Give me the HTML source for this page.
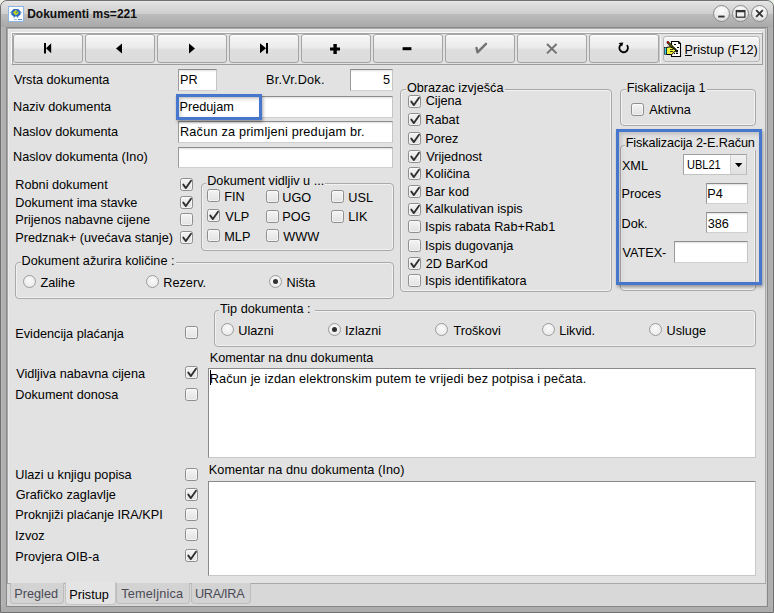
<!DOCTYPE html>
<html><head><meta charset="utf-8"><style>
html,body{margin:0;padding:0;}
body{width:774px;height:613px;position:relative;overflow:hidden;background:#e9efe4;font-family:"Liberation Sans",sans-serif;}
.t{position:absolute;font-size:12.7px;line-height:12.7px;white-space:pre;color:#000;}
.cb{position:absolute;width:11px;height:11px;border:1px solid #8e8e8e;border-radius:2.5px;background:linear-gradient(#f4f4f4,#e2e2e2);box-shadow:inset 0 0 0 1px rgba(255,255,255,0.5);}
.cb svg{position:absolute;left:-1px;top:-1px;}
.rb{position:absolute;width:11px;height:11px;border:1px solid #9c9c9c;border-radius:50%;background:radial-gradient(circle at 50% 40%,#fafafa,#e6e6e6);}
.rb .dot{position:absolute;left:3px;top:3px;width:5px;height:5px;border-radius:50%;background:#303030;}
.fld{position:absolute;box-sizing:border-box;background:#fff;border:1px solid;border-color:#8c8c8c #c4c4c4 #cfcfcf #9a9a9a;box-shadow:inset 0 2px 2px -1px rgba(0,0,0,0.13);}
.grp{position:absolute;box-sizing:border-box;border:1px solid #a9a9a9;border-radius:4px;box-shadow:inset 0 0 0 1px #f1f1f1;}
.gt{background:#e2e2e2;}
.btn{position:absolute;box-sizing:border-box;width:70px;height:29px;top:34px;border:1px solid #a4a4a4;border-radius:3px;background:linear-gradient(#f6f6f6 0%,#ececec 45%,#dedede 55%,#dcdcdc 100%);box-shadow:inset 0 1px 0 #fff;}
.btn svg{position:absolute;left:-1px;top:0;}
.hl{position:absolute;box-sizing:border-box;border:3px solid #4777cc;box-shadow:1px 2px 3px rgba(0,0,0,0.35), inset 2px 2px 4px rgba(0,0,0,0.16);}
.tab{position:absolute;box-sizing:border-box;border:1px solid #bdbdbd;border-top:none;border-radius:0 0 4px 4px;background:#d3d3d3;}
</style></head><body>
<div style="position:absolute;left:0px;top:0px;width:774px;height:613px;background:#b0b0b0;border-radius:7px 7px 0 0;box-sizing:border-box;border:1px solid #707070;"></div>
<div style="position:absolute;left:1px;top:1px;width:772px;height:26px;background:linear-gradient(#efefef 0px,#e2e2e2 1px,#cecece 13px,#bcbcbc 13px,#a9a9a9 26px);border-radius:6px 6px 0 0;"></div>
<div style="position:absolute;left:1px;top:27px;width:5px;height:585px;background:#b0b0b0;border-left:1px solid #b9b9b9;box-sizing:border-box;"></div>
<div style="position:absolute;left:767px;top:27px;width:6px;height:585px;background:#b0b0b0;"></div>
<div style="position:absolute;left:1px;top:607px;width:772px;height:5px;background:#acacac;"></div>
<div style="position:absolute;left:6px;top:27px;width:762px;height:580px;box-sizing:border-box;background:#d8d8d8;border:1px solid #888;"></div>
<div style="position:absolute;left:766px;top:28px;width:1px;height:578px;background:#cdcdcd;"></div>
<div style="position:absolute;left:7px;top:28px;width:759px;height:556px;box-sizing:border-box;background:#e2e2e2;border:1px solid #a8a8a8;box-shadow:inset 1px 1px 0 #ebebeb;"></div>
<div style="position:absolute;left:8px;top:6px;width:14px;height:14px;border:1px solid #8db5e2;background:#fff;"><svg width="14" height="14" viewBox="0 0 14 14" style="position:absolute;left:0;top:0"><path d="M4.6 2 L9.2 2 L11.6 4.4 L11.6 7.4 L9.2 9.4 L4.6 9.4 L2.2 7.4 L2.2 4.4 Z" fill="#2a6cc0"/><path d="M6.9 2.8 L9.9 5.7 L6.9 8.6 L3.9 5.7 Z" fill="#c6d41e"/><circle cx="7.5" cy="5.3" r="0.8" fill="#2a6cc0"/><rect x="0.8" y="5.2" width="1.6" height="0.9" fill="#7fa6d8"/><rect x="11.4" y="5.2" width="1.6" height="0.9" fill="#7fa6d8"/><rect x="4.6" y="9.2" width="1.3" height="1.3" fill="#2a6cc0"/><rect x="7.9" y="9.2" width="1.3" height="1.3" fill="#2a6cc0"/><rect x="4.8" y="12" width="3" height="1.1" fill="#9dbde6"/><rect x="9" y="12" width="4" height="1.1" fill="#5a8fd2"/></svg></div>
<div style="position:absolute;left:27.2px;top:7.6px;font-size:12px;line-height:12px;font-weight:bold;white-space:pre;color:#101010;font-family:'Liberation Sans',sans-serif;">Dokumenti ms=221</div>
<div style="position:absolute;left:712.5px;top:5.3px;width:15px;height:15px;border-radius:50%;border:1px solid #8a8a8a;background:radial-gradient(circle at 50% 30%,#fdfdfd 0%,#ececec 50%,#cfcfcf 100%);"><svg width="15" height="15" viewBox="0 0 15 15" style="position:absolute;left:0;top:0"><rect x="4.2" y="9.6" width="6.4" height="1.9" fill="#333"/></svg></div>
<div style="position:absolute;left:731.5px;top:5.3px;width:15px;height:15px;border-radius:50%;border:1px solid #8a8a8a;background:radial-gradient(circle at 50% 30%,#fdfdfd 0%,#ececec 50%,#cfcfcf 100%);"><svg width="15" height="15" viewBox="0 0 15 15" style="position:absolute;left:0;top:0"><rect x="3.3" y="4.6" width="8.6" height="6.6" fill="none" stroke="#333" stroke-width="1.3"/><rect x="3.3" y="4" width="8.6" height="2.3" fill="#333"/></svg></div>
<div style="position:absolute;left:750.5px;top:5.3px;width:15px;height:15px;border-radius:50%;border:1px solid #8a8a8a;background:radial-gradient(circle at 50% 30%,#fdfdfd 0%,#ececec 50%,#cfcfcf 100%);"><svg width="15" height="15" viewBox="0 0 15 15" style="position:absolute;left:0;top:0"><path d="M4.2 4.2 L10.8 10.8 M10.8 4.2 L4.2 10.8" stroke="#333" stroke-width="1.9"/></svg></div>
<div style="position:absolute;left:11px;top:32px;width:752px;height:33px;box-sizing:border-box;border-top:1px solid #fafafa;border-left:1px solid #fafafa;border-bottom:1px solid #9c9c9c;border-right:1px solid #9c9c9c;"></div>
<div style="position:absolute;left:12px;top:33px;width:750px;height:1px;background:#a6a6a6;"></div>
<div style="position:absolute;left:12px;top:33px;width:1px;height:31px;background:#a6a6a6;"></div>
<div class="btn" style="left:13px"><svg width="70" height="29" viewBox="0 0 70 29"><rect x="31" y="8" width="2" height="10.5" fill="#000"/><path d="M33 13.25 L38.2 8.2 L38.2 18.3 Z" fill="#000"/></svg></div>
<div class="btn" style="left:85px"><svg width="70" height="29" viewBox="0 0 70 29"><path d="M31 13.5 L37 8.5 L37 18.5 Z" fill="#000"/></svg></div>
<div class="btn" style="left:157px"><svg width="70" height="29" viewBox="0 0 70 29"><path d="M38 13.5 L32 8.5 L32 18.5 Z" fill="#000"/></svg></div>
<div class="btn" style="left:229px"><svg width="70" height="29" viewBox="0 0 70 29"><path d="M31 8.2 L37 13.25 L31 18.3 Z" fill="#000"/><rect x="37" y="8" width="2" height="10.5" fill="#000"/></svg></div>
<div class="btn" style="left:301px"><svg width="70" height="29" viewBox="0 0 70 29"><rect x="29" y="12.5" width="10" height="3" fill="#000"/><rect x="32.4" y="9" width="3.4" height="10" fill="#000"/></svg></div>
<div class="btn" style="left:373px"><svg width="70" height="29" viewBox="0 0 70 29"><rect x="29.6" y="12.2" width="8.8" height="3" fill="#000"/></svg></div>
<div class="btn" style="left:445px"><svg width="70" height="29" viewBox="0 0 70 29"><path d="M31.5 13 L32.5 17.3 L41 8.8" fill="none" stroke="#737373" stroke-width="2.4" stroke-linecap="round" stroke-linejoin="round"/></svg></div>
<div class="btn" style="left:517px"><svg width="70" height="29" viewBox="0 0 70 29"><path d="M30 9 L39.6 18.4 M39.6 9 L30 18.4" stroke="#737373" stroke-width="2"/></svg></div>
<div class="btn" style="left:589px"><svg width="70" height="29" viewBox="0 0 70 29"><path d="M33.1 8.9 A 4.3 4.3 0 1 0 37.9 10.1" fill="none" stroke="#000" stroke-width="1.8"/><path d="M29.6 7.9 L34.3 7.6 L33 11.6 Z" fill="#000"/></svg></div>
<div style="position:absolute;left:660px;top:35px;width:1px;height:28px;background:#f4f4f4;"></div>
<div style="position:absolute;left:659px;top:35px;width:1px;height:28px;background:#c8c8c8;"></div>
<div class="btn" style="left:663px;top:36px;width:97px;height:26px;border-color:#b9b9b9;background:linear-gradient(#f7f7f7,#e9e9e9 50%,#e1e1e1);"></div>
<svg style="position:absolute;left:664px;top:40px" width="18" height="18" viewBox="0 0 18 18">
<path d="M7.5 1.5 L14.5 1.5 L16.5 3.5 L16.5 16.5 L7.5 16.5 Z" fill="#fff" stroke="#000" stroke-width="1.1"/>
<path d="M14.5 1.5 L14.5 3.5 L16.5 3.5" fill="none" stroke="#000" stroke-width="0.9"/>
<rect x="10" y="4" width="2" height="1" fill="#000"/><rect x="13" y="7" width="2" height="1" fill="#000"/><rect x="13" y="10" width="1" height="1" fill="#000"/><rect x="10" y="13" width="1" height="1" fill="#000"/><rect x="12" y="13" width="2" height="1" fill="#000"/>
<path d="M3.8 2.3 L12.8 11.3" stroke="#000" stroke-width="2.4" stroke-linecap="round"/><path d="M4.5 3 L12.3 10.8" stroke="#f0f000" stroke-width="1" stroke-dasharray="1 0.6"/>
<rect x="3.2" y="1.6" width="1.6" height="1.6" fill="#e00000"/>
<path d="M2.5 7.5 L6 6.8 L9 8.2 L12 10.2 L10.5 11.5 L9.5 13 L7.5 14.5 L2.5 14.5 Z" fill="#f2f23a" stroke="#000" stroke-width="1"/>
<path d="M6 9.5 L9.5 9.5 M6 11.5 L9 11.5" stroke="#000" stroke-width="0.8"/>
<rect x="0.6" y="7.6" width="2" height="6.6" fill="#3ad8f0" stroke="#000" stroke-width="0.6"/>
</svg>
<div class="t" style="left:684.5px;top:43.75px;">Pristup (F12)</div>
<div style="position:absolute;left:685px;top:55px;width:7px;height:1px;background:#000;"></div>
<div class="t" style="left:13.9px;top:74.25px;">Vrsta dokumenta</div>
<div class="t" style="left:13.0px;top:101.25px;">Naziv dokumenta</div>
<div class="t" style="left:13.0px;top:126.25px;">Naslov dokumenta</div>
<div class="t" style="left:13.0px;top:151.25px;">Naslov dokumenta (Ino)</div>
<div class="t" style="left:266.0px;top:74.25px;letter-spacing:0.2px;">Br.Vr.Dok.</div>
<div class="fld" style="left:178px;top:69px;width:39px;height:22px"></div>
<div class="t" style="left:180.0px;top:74.25px;">PR</div>
<div class="fld" style="left:350px;top:69px;width:43px;height:22px"></div>
<div class="t" style="left:350px;width:40px;text-align:right;top:74.25px">5</div>
<div class="fld" style="left:178px;top:96px;width:215px;height:22px"></div>
<div class="t" style="left:179.5px;top:101.25px;">Predujam</div>
<div class="fld" style="left:178px;top:121px;width:215px;height:22px"></div>
<div class="t" style="letter-spacing:0.2px;left:180.0px;top:126.25px;">Račun za primljeni predujam br.</div>
<div class="fld" style="left:178px;top:147px;width:215px;height:21px"></div>
<div class="t" style="left:15.3px;top:179.25px;">Robni dokument</div>
<div class="t" style="left:15.3px;top:197.25px;">Dokument ima stavke</div>
<div class="t" style="left:15.3px;top:213.75px;">Prijenos nabavne cijene</div>
<div class="t" style="left:15.3px;top:231.55px;">Predznak+ (uvećava stanje)</div>
<div class="cb" style="left:180.3px;top:177.7px"><svg width="13" height="13" viewBox="0 0 13 13"><path d="M3.3 6.6 L5.9 10.1 L11 2.7" fill="none" stroke="#2e2e2e" stroke-width="1.85" stroke-linecap="round" stroke-linejoin="round"/></svg></div>
<div class="cb" style="left:180.3px;top:195.5px"><svg width="13" height="13" viewBox="0 0 13 13"><path d="M3.3 6.6 L5.9 10.1 L11 2.7" fill="none" stroke="#2e2e2e" stroke-width="1.85" stroke-linecap="round" stroke-linejoin="round"/></svg></div>
<div class="cb" style="left:180.3px;top:212.7px"></div>
<div class="cb" style="left:180.3px;top:230.5px"><svg width="13" height="13" viewBox="0 0 13 13"><path d="M3.3 6.6 L5.9 10.1 L11 2.7" fill="none" stroke="#2e2e2e" stroke-width="1.85" stroke-linecap="round" stroke-linejoin="round"/></svg></div>
<div class="grp" style="left:201px;top:183px;width:193px;height:68px"></div>
<div class="t gt" style="left:206.2px;top:175.25px;padding:0 1px 0 1px;">Dokument vidljiv u ...</div>
<div class="cb" style="left:207.3px;top:189.3px"></div>
<div class="t" style="left:224.3px;top:191.25px;">FIN</div>
<div class="cb" style="left:207.3px;top:209.3px"><svg width="13" height="13" viewBox="0 0 13 13"><path d="M3.3 6.6 L5.9 10.1 L11 2.7" fill="none" stroke="#2e2e2e" stroke-width="1.85" stroke-linecap="round" stroke-linejoin="round"/></svg></div>
<div class="t" style="left:225.2px;top:211.25px;">VLP</div>
<div class="cb" style="left:207.3px;top:229.3px"></div>
<div class="t" style="left:224.3px;top:231.25px;">MLP</div>
<div class="cb" style="left:265.5px;top:190.2px"></div>
<div class="t" style="left:282.3px;top:191.55px;">UGO</div>
<div class="cb" style="left:265.5px;top:209.7px"></div>
<div class="t" style="left:282.3px;top:211.25px;">POG</div>
<div class="cb" style="left:265.5px;top:229.3px"></div>
<div class="t" style="left:283.2px;top:231.25px;">WWW</div>
<div class="cb" style="left:331.3px;top:190.2px"></div>
<div class="t" style="left:348.3px;top:191.55px;">USL</div>
<div class="cb" style="left:331.3px;top:209.7px"></div>
<div class="t" style="left:348.3px;top:211.25px;">LIK</div>
<div class="grp" style="left:15px;top:262px;width:379px;height:37px"></div>
<div class="t gt" style="left:20.5px;top:254.95px;padding:0 1px 0 1px;">Dokument ažurira količine :</div>
<div class="rb" style="left:23.0px;top:275.0px"></div>
<div class="t" style="left:40.4px;top:276.75px;">Zalihe</div>
<div class="rb" style="left:146.0px;top:275.0px"></div>
<div class="t" style="left:163.3px;top:276.75px;">Rezerv.</div>
<div class="rb" style="left:269.2px;top:275.0px"><div class="dot"></div></div>
<div class="t" style="left:286.5px;top:276.75px;">Ništa</div>
<div class="grp" style="left:400px;top:89px;width:212px;height:203px"></div>
<div class="t gt" style="left:405.9px;top:81.95px;padding:0 1px 0 1px;">Obrazac izvješća</div>
<div class="cb" style="left:408.3px;top:94.5px"><svg width="13" height="13" viewBox="0 0 13 13"><path d="M3.3 6.6 L5.9 10.1 L11 2.7" fill="none" stroke="#2e2e2e" stroke-width="1.85" stroke-linecap="round" stroke-linejoin="round"/></svg></div>
<div class="t" style="left:425.7px;top:95.45px;">Cijena</div>
<div class="cb" style="left:408.3px;top:113.4px"><svg width="13" height="13" viewBox="0 0 13 13"><path d="M3.3 6.6 L5.9 10.1 L11 2.7" fill="none" stroke="#2e2e2e" stroke-width="1.85" stroke-linecap="round" stroke-linejoin="round"/></svg></div>
<div class="t" style="left:425.3px;top:114.35px;">Rabat</div>
<div class="cb" style="left:408.3px;top:131.7px"><svg width="13" height="13" viewBox="0 0 13 13"><path d="M3.3 6.6 L5.9 10.1 L11 2.7" fill="none" stroke="#2e2e2e" stroke-width="1.85" stroke-linecap="round" stroke-linejoin="round"/></svg></div>
<div class="t" style="left:425.3px;top:132.65px;">Porez</div>
<div class="cb" style="left:408.3px;top:150.0px"><svg width="13" height="13" viewBox="0 0 13 13"><path d="M3.3 6.6 L5.9 10.1 L11 2.7" fill="none" stroke="#2e2e2e" stroke-width="1.85" stroke-linecap="round" stroke-linejoin="round"/></svg></div>
<div class="t" style="left:426.2px;top:150.95px;">Vrijednost</div>
<div class="cb" style="left:408.3px;top:167.0px"><svg width="13" height="13" viewBox="0 0 13 13"><path d="M3.3 6.6 L5.9 10.1 L11 2.7" fill="none" stroke="#2e2e2e" stroke-width="1.85" stroke-linecap="round" stroke-linejoin="round"/></svg></div>
<div class="t" style="left:425.3px;top:167.95px;">Količina</div>
<div class="cb" style="left:408.3px;top:184.7px"><svg width="13" height="13" viewBox="0 0 13 13"><path d="M3.3 6.6 L5.9 10.1 L11 2.7" fill="none" stroke="#2e2e2e" stroke-width="1.85" stroke-linecap="round" stroke-linejoin="round"/></svg></div>
<div class="t" style="left:425.3px;top:185.65px;">Bar kod</div>
<div class="cb" style="left:408.3px;top:202.5px"><svg width="13" height="13" viewBox="0 0 13 13"><path d="M3.3 6.6 L5.9 10.1 L11 2.7" fill="none" stroke="#2e2e2e" stroke-width="1.85" stroke-linecap="round" stroke-linejoin="round"/></svg></div>
<div class="t" style="left:425.3px;top:203.45px;">Kalkulativan ispis</div>
<div class="cb" style="left:408.3px;top:220.0px"></div>
<div class="t" style="left:425.1px;top:220.95px;">Ispis rabata Rab+Rab1</div>
<div class="cb" style="left:408.3px;top:239.2px"></div>
<div class="t" style="left:425.1px;top:240.15px;">Ispis dugovanja</div>
<div class="cb" style="left:408.3px;top:256.7px"><svg width="13" height="13" viewBox="0 0 13 13"><path d="M3.3 6.6 L5.9 10.1 L11 2.7" fill="none" stroke="#2e2e2e" stroke-width="1.85" stroke-linecap="round" stroke-linejoin="round"/></svg></div>
<div class="t" style="left:425.7px;top:257.65px;">2D BarKod</div>
<div class="cb" style="left:408.3px;top:274.2px"></div>
<div class="t" style="left:425.1px;top:275.15px;">Ispis identifikatora</div>
<div class="grp" style="left:620px;top:89px;width:136px;height:37px"></div>
<div class="t gt" style="left:625.7px;top:82.25px;padding:0 1px 0 1px;">Fiskalizacija 1</div>
<div class="cb" style="left:631.3px;top:102.8px"></div>
<div class="t" style="left:649.3px;top:103.75px;">Aktivna</div>
<div class="grp" style="left:619.5px;top:145px;width:136px;height:146px"></div>
<div class="t gt" style="left:624.7px;top:137.25px;padding:0 1px 0 1px;letter-spacing:-0.12px;">Fiskalizacija 2-E.Račun</div>
<div class="t" style="left:621.9px;top:159.75px;">XML</div>
<div class="fld" style="left:683px;top:154px;width:64px;height:21px;box-shadow:none;border-color:#a0a0a0 #b8b8b8 #c4c4c4 #a0a0a0"></div>
<div style="position:absolute;left:730px;top:155px;width:16px;height:19px;background:linear-gradient(#f2f2f2,#e0e0e0);border-left:1px solid #d0d0d0;box-sizing:border-box;"></div>
<svg style="position:absolute;left:735px;top:163px" width="8" height="5" viewBox="0 0 8 5"><path d="M0 0 L7.4 0 L3.7 4.2 Z" fill="#000"/></svg>
<div class="t" style="left:686.7px;top:159.25px;transform:scaleX(0.87);transform-origin:0 0;">UBL21</div>
<div class="t" style="left:621.5px;top:188.45px;">Proces</div>
<div class="fld" style="left:706px;top:183px;width:42px;height:21px"></div>
<div class="t" style="left:707.2px;top:188.45px;">P4</div>
<div class="t" style="left:621.5px;top:217.65px;">Dok.</div>
<div class="fld" style="left:706px;top:212px;width:42px;height:21px"></div>
<div class="t" style="left:707.7px;top:217.65px;">386</div>
<div class="t" style="left:622.4px;top:246.95px;">VATEX-</div>
<div class="fld" style="left:674px;top:241px;width:74px;height:22px"></div>
<div class="hl" style="left:176px;top:94px;width:86px;height:26px"></div>
<div class="hl" style="left:616px;top:128.5px;width:146px;height:156.5px"></div>
<div class="grp" style="left:213.5px;top:310px;width:542px;height:37px"></div>
<div class="t gt" style="left:219.0px;top:303.25px;padding:0 1px 0 1px;">Tip dokumenta : </div>
<div class="rb" style="left:220.7px;top:323.0px"></div>
<div class="t" style="left:238.3px;top:324.75px;">Ulazni</div>
<div class="rb" style="left:328.3px;top:323.0px"><div class="dot"></div></div>
<div class="t" style="left:345.1px;top:324.75px;">Izlazni</div>
<div class="rb" style="left:435.0px;top:323.0px"></div>
<div class="t" style="left:453.4px;top:324.75px;">Troškovi</div>
<div class="rb" style="left:542.2px;top:323.0px"></div>
<div class="t" style="left:559.2px;top:324.75px;">Likvid.</div>
<div class="rb" style="left:649.2px;top:323.0px"></div>
<div class="t" style="left:666.5px;top:324.75px;">Usluge</div>
<div class="t" style="left:15.3px;top:327.75px;">Evidencija plaćanja</div>
<div class="cb" style="left:185.3px;top:326.2px"></div>
<div class="t" style="left:209.7px;top:351.95px;">Komentar na dnu dokumenta</div>
<div class="fld" style="left:207.5px;top:368px;width:548px;height:90px;box-shadow:none;border-color:#8a8a8a #c8c8c8 #c8c8c8 #8a8a8a"></div>
<div class="t" style="left:209.7px;top:372.75px;letter-spacing:0.13px;">Račun je izdan elektronskim putem te vrijedi bez potpisa i pečata.</div>
<div style="position:absolute;left:210px;top:370px;width:1px;height:15px;background:#000;"></div>
<div class="t" style="left:16.2px;top:367.75px;">Vidljiva nabavna cijena</div>
<div class="cb" style="left:185.3px;top:366.3px"><svg width="13" height="13" viewBox="0 0 13 13"><path d="M3.3 6.6 L5.9 10.1 L11 2.7" fill="none" stroke="#2e2e2e" stroke-width="1.85" stroke-linecap="round" stroke-linejoin="round"/></svg></div>
<div class="t" style="left:15.3px;top:388.95px;">Dokument donosa</div>
<div class="cb" style="left:185.3px;top:387.5px"></div>
<div class="t" style="left:208.8px;top:464.05px;letter-spacing:0.08px;">Komentar na dnu dokumenta (Ino)</div>
<div class="fld" style="left:208px;top:480.5px;width:547.5px;height:95px;box-shadow:none;border-color:#8a8a8a #c8c8c8 #c8c8c8 #8a8a8a"></div>
<div class="t" style="left:15.3px;top:468.95px;">Ulazi u knjigu popisa</div>
<div class="cb" style="left:185.3px;top:467.5px"></div>
<div class="t" style="left:15.7px;top:488.95px;">Grafičko zaglavlje</div>
<div class="cb" style="left:185.3px;top:487.5px"><svg width="13" height="13" viewBox="0 0 13 13"><path d="M3.3 6.6 L5.9 10.1 L11 2.7" fill="none" stroke="#2e2e2e" stroke-width="1.85" stroke-linecap="round" stroke-linejoin="round"/></svg></div>
<div class="t" style="left:15.3px;top:508.95px;">Proknjiži plaćanje IRA/KPI</div>
<div class="cb" style="left:185.3px;top:507.5px"></div>
<div class="t" style="left:15.1px;top:529.95px;">Izvoz</div>
<div class="cb" style="left:185.3px;top:528.3px"></div>
<div class="t" style="left:15.3px;top:551.05px;">Provjera OIB-a</div>
<div class="cb" style="left:185.3px;top:549.2px"><svg width="13" height="13" viewBox="0 0 13 13"><path d="M3.3 6.6 L5.9 10.1 L11 2.7" fill="none" stroke="#2e2e2e" stroke-width="1.85" stroke-linecap="round" stroke-linejoin="round"/></svg></div>
<div class="tab" style="left:10px;top:583px;width:54px;height:20.5px"></div>
<div class="tab" style="left:115.5px;top:583px;width:74px;height:20.5px"></div>
<div class="tab" style="left:191px;top:583px;width:60px;height:20.5px"></div>
<div class="tab" style="left:64.5px;top:582px;width:51px;height:23px;background:#e4e4e4;border-color:#c4c4c4;"></div>
<div class="t" style="left:14.3px;top:587.75px;color:#4a4a55;">Pregled</div>
<div class="t" style="left:69.3px;top:588.55px;">Pristup</div>
<div class="t" style="left:121.3px;top:587.75px;color:#4a4a55;letter-spacing:0.2px;">Temeljnica</div>
<div class="t" style="left:195.0px;top:587.75px;color:#4a4a55;letter-spacing:-0.3px;">URA/IRA</div>
</body></html>
